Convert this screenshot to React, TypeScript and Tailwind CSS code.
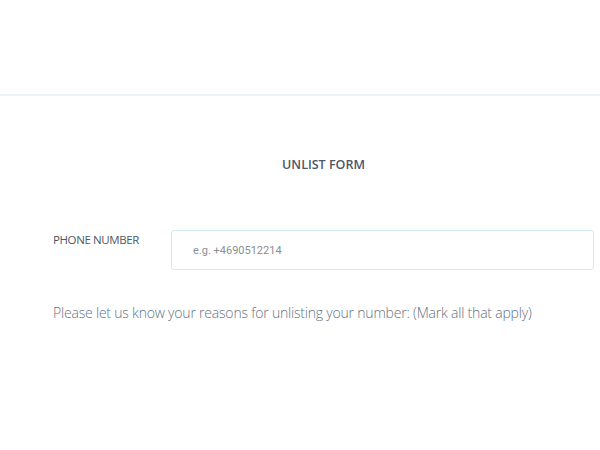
export default function App() {
  return (
    <div className="min-h-[450px] w-full bg-white font-['Open_Sans',sans-serif]">
      <div className="h-[96px] border-b-2 border-[#e9f4fc]" />
      <div className="pl-[53px] pr-[6px]">
        <h1 className="mt-[60px] text-center text-[12.5px] font-semibold leading-[18px] text-[#4b5867]">
          UNLIST FORM
        </h1>
        <div className="mt-[56px] flex items-start">
          <label className="w-[118px] pt-[2px] text-[11.5px] leading-[16px] tracking-[-0.4px] text-[#4b5867]">
            PHONE NUMBER
          </label>
          <input
            type="text"
            placeholder="e.g. +4690512214"
            className="h-[40px] flex-1 rounded-[3px] border border-[#d3ebf8] px-[21px] font-['Roboto',sans-serif] text-[11px] text-[#555] outline-none placeholder:text-[#8a8f96]"
          />
        </div>
        <p className="mt-[33px] text-[14px] font-light leading-[20px] tracking-[-0.2px] text-[#66727f]">
          Please let us know your reasons for unlisting your number: (Mark all that apply)
        </p>
      </div>
    </div>
  )
}
